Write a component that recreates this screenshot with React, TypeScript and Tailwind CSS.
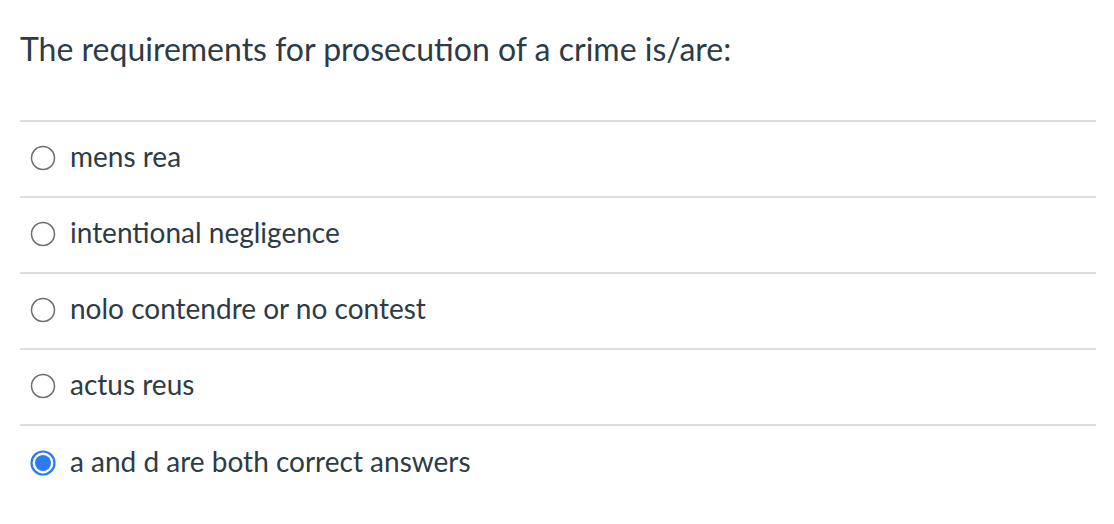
import React from 'react';

const options = [
  { id: 'a', label: 'mens rea' },
  { id: 'b', label: 'intentional negligence' },
  { id: 'c', label: 'nolo contendre or no contest' },
  { id: 'd', label: 'actus reus' },
  { id: 'e', label: 'a and d are both correct answers' },
];

const Radio: React.FC<{ checked: boolean }> = ({ checked }) =>
  checked ? (
    <svg width="26" height="26" viewBox="0 0 26 26" className="shrink-0">
      <circle cx="13" cy="13" r="11.5" fill="#fff" stroke="#2b7bf3" strokeWidth="2.2" />
      <circle cx="13" cy="13" r="8" fill="#2b7bf3" />
    </svg>
  ) : (
    <svg width="26" height="26" viewBox="0 0 26 26" className="shrink-0">
      <circle cx="13" cy="13" r="11.5" fill="#fff" stroke="#6d6d6d" strokeWidth="1.5" />
    </svg>
  );

export default function App() {
  const selected = 'e';
  return (
    <div className="w-[1114px] h-[524px] bg-white pl-5 pr-[18px] pt-[26px] font-['Lato',sans-serif] text-[#2d3b45]">
      <h1 className="text-[32px] leading-[46px] font-normal">
        The requirements for prosecution of a crime is/are:
      </h1>
      <div className="mt-[48px] border-t-2 border-[#dcdcdc]">
        {options.map((o, i) => (
          <div
            key={o.id}
            className={`flex items-center gap-[14px] h-[76px] pl-[10px] pb-[3px] ${i < options.length - 1 ? 'border-b-2 border-[#dcdcdc]' : ''}`}
          >
            <Radio checked={o.id === selected} />
            <span className="text-[28px] leading-none mb-[4px]">{o.label}</span>
          </div>
        ))}
      </div>
    </div>
  );
}
